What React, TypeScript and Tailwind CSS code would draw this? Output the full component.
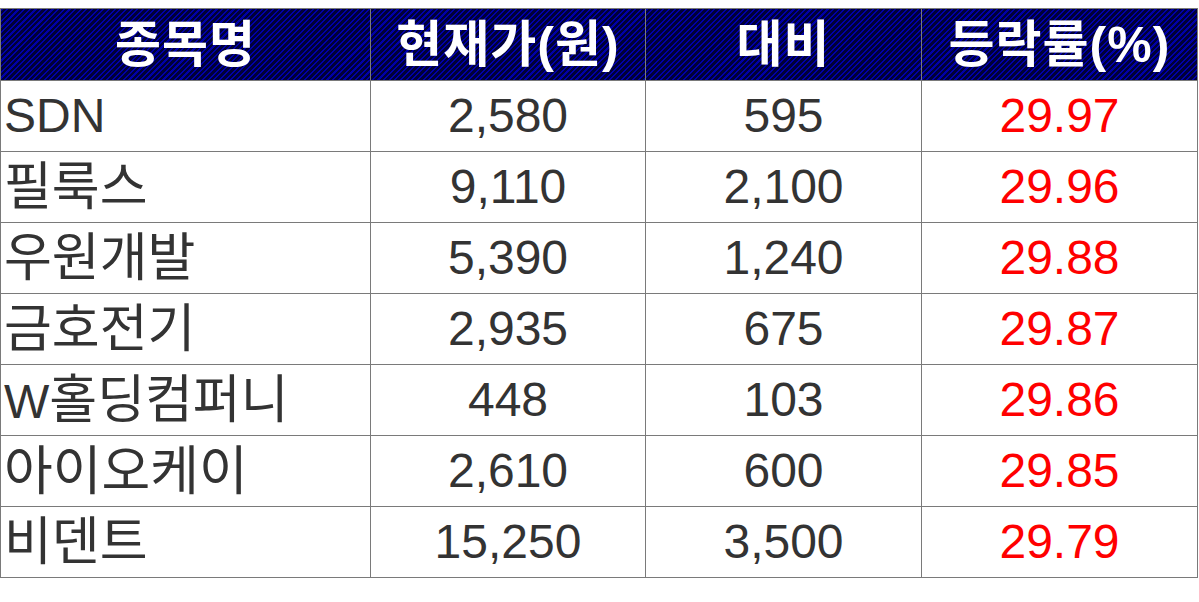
import React from "react";

const rows: [React.ReactNode, string, string, string, string][] = [
  ["SDN", "2,580", "595", "29.97", "a"],
  [<span className="text-[52px]">필룩스</span>, "9,110", "2,100", "29.96", "b"],
  [<span className="text-[52px]">우원개발</span>, "5,390", "1,240", "29.88", "c"],
  [<span className="text-[52px]">금호전기</span>, "2,935", "675", "29.87", "d"],
  [
    <>
      W<span className="text-[52px]">홀딩컴퍼니</span>
    </>,
    "448",
    "103",
    "29.86",
    "e",
  ],
  [<span className="text-[53px]">아이오케이</span>, "2,610", "600", "29.85", "f"],
  [<span className="text-[52px]">비덴트</span>, "15,250", "3,500", "29.79", "g"],
];

const font = { fontFamily: '"Liberation Sans", "Noto Sans CJK KR", sans-serif' };

export default function App() {
  return (
    <div className="w-[1199px] h-[602px] bg-white pt-[8px]" style={font}>
      <table className="border-collapse table-fixed w-[1197px]">
        <colgroup>
          <col className="w-[370px]" />
          <col className="w-[275px]" />
          <col className="w-[276px]" />
          <col className="w-[276px]" />
        </colgroup>
        <thead>
          <tr className="h-[72px] bg-[repeating-linear-gradient(135deg,#0000a8_0px,#0000a8_1.5px,#000038_1.5px,#000038_4px)]">
            {["종목명", "현재가(원)", "대비", "등락률(%)"].map((h) => (
              <th
                key={h}
                className="border border-[#7a7a7a] text-white font-bold text-[50px] leading-none text-center p-0 tracking-[1px]"
              >
                {h}
              </th>
            ))}
          </tr>
        </thead>
        <tbody>
          {rows.map((r) => (
            <tr key={r[4]} className="h-[71px]">
              <td className="border border-[#7a7a7a] text-[#333333] text-[48px] leading-none pl-[3px] text-left whitespace-nowrap">
                {r[0]}
              </td>
              <td className="border border-[#7a7a7a] text-[#333333] text-[48px] leading-none text-center">
                {r[1]}
              </td>
              <td className="border border-[#7a7a7a] text-[#333333] text-[48px] leading-none text-center">
                {r[2]}
              </td>
              <td className="border border-[#7a7a7a] text-[#ff0000] text-[48px] leading-none text-center">
                {r[3]}
              </td>
            </tr>
          ))}
        </tbody>
      </table>
    </div>
  );
}
